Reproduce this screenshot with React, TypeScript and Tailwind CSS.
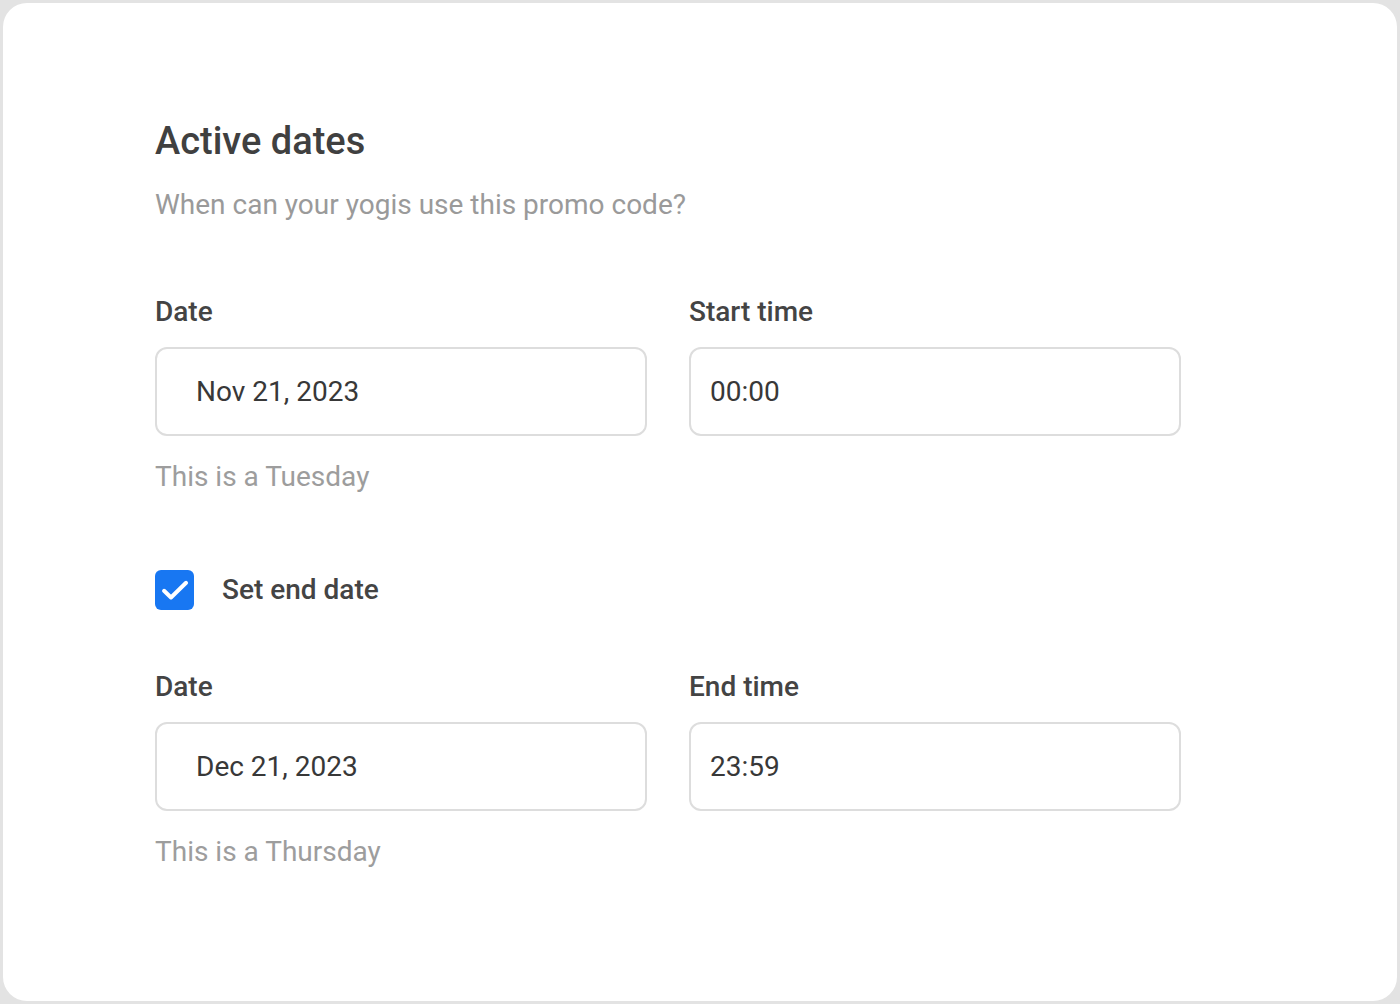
import React from 'react';

const font = { fontFamily: 'Roboto, "Noto Sans", sans-serif' };

function Field({ label, value, pad }: { label: string; value: string; pad: string }) {
  return (
    <div className="flex flex-col">
      <div className="text-[28px] leading-[34px] font-medium text-[#444444]">{label}</div>
      <div
        className={`mt-[18px] h-[89px] flex items-center rounded-[12px] border-2 border-[#dddddd] bg-white text-[28px] text-[#383838] ${pad}`}
      >
        {value}
      </div>
    </div>
  );
}

function Section({
  dateValue,
  timeLabel,
  timeValue,
  helper,
}: {
  dateValue: string;
  timeLabel: string;
  timeValue: string;
  helper: string;
}) {
  return (
    <div className="flex flex-col">
      <div className="grid grid-cols-[492px_492px] gap-x-[42px]">
        <Field label="Date" value={dateValue} pad="pl-[39px]" />
        <Field label={timeLabel} value={timeValue} pad="pl-[19px]" />
      </div>
      <div className="mt-[25px] text-[28px] leading-[32px] text-[#9d9d9d]">{helper}</div>
    </div>
  );
}

export default function App() {
  return (
    <div className="w-[1400px] h-[1004px] bg-[#e3e3e3] p-[3px]" style={font}>
      <div className="h-full bg-white rounded-[24px] pl-[152px] pt-[116px] flex flex-col">
        <h1 className="text-[38px] leading-[44px] font-medium text-[#404040]">Active dates</h1>
        <p className="mt-[26px] text-[28px] leading-[32px] text-[#9a9a9a]">
          When can your yogis use this promo code?
        </p>

        <div className="mt-[74px]">
          <Section dateValue="Nov 21, 2023" timeLabel="Start time" timeValue="00:00" helper="This is a Tuesday" />
        </div>

        {/* end date toggle */}
        <div className="mt-[77px] flex items-center gap-[28px]">
          <div className="w-[39px] h-[40px] rounded-[6px] bg-[#1877f2] flex items-center justify-center">
            <svg width="32" height="32" viewBox="0 0 24 24" fill="none">
              <path d="M3.8 12.6l5.2 5L20.3 6.6" stroke="white" strokeWidth="3" strokeLinecap="round" strokeLinejoin="round" />
            </svg>
          </div>
          <span className="text-[28px] leading-[32px] font-medium text-[#444444]">Set end date</span>
        </div>

        <div className="mt-[60px]">
          <Section dateValue="Dec 21, 2023" timeLabel="End time" timeValue="23:59" helper="This is a Thursday" />
        </div>
      </div>
    </div>
  );
}
